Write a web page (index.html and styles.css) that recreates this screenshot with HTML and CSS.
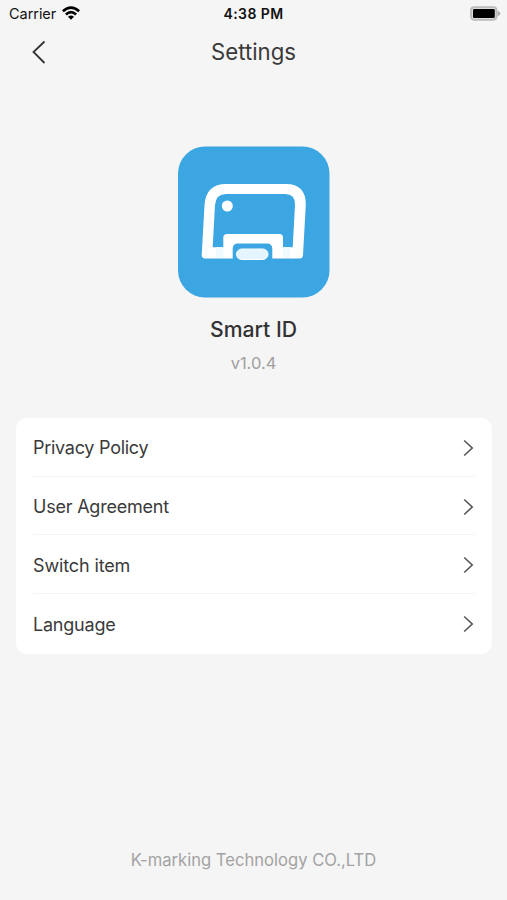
FILE: index.html
```html
<!DOCTYPE html>
<html lang="en">
<head>
<meta charset="utf-8">
<title>Settings</title>
<link rel="stylesheet" href="styles.css">
</head>
<body>
<header class="status">
  <div class="carrier"><span class="carrier-name">Carrier</span>
    <svg width="18" height="14" viewBox="0 0 18 14"><path d="M0 4.300Q9-3.800 18 4.300L16.200 6.200Q9 0 1.800 6.200ZM3 7.500Q9 2.200 15 7.500L13.200 9.400Q9 5.800 4.800 9.400ZM6 10.700Q9 8.200 12 10.700L9 13.800Z"/></svg>
  </div>
  <span class="time">4:38 PM</span>
  <svg class="battery" width="31" height="15" viewBox="0 0 31 15"><rect x="1" y="1.200" width="25.500" height="12.600" rx="3.200" fill="#ddd" stroke="#bbb" stroke-width="1.800"/><rect x="3" y="3" width="21.800" height="9" rx="1.300"/><path d="M27.500 4.500q2.800 1.400 2.800 3t-2.800 3z" fill="#aaa"/></svg>
</header>
<nav class="nav">
  <svg class="back" width="14" height="24" viewBox="0 0 14 24"><path d="M12.500 1.500 1.500 12l11 11"/></svg>
  <h1 class="title">Settings</h1>
</nav>
<section class="about">
  <svg class="logo" width="152" height="152" viewBox="0 0 152 152">
    <rect y=".5" width="151.500" height="151" rx="27" fill="#3ba6e2"/>
    <path fill="#fff" fill-rule="evenodd" d="M27 112.500Q23.500 112.500 23.700 109L26.500 59Q28 38 48 38H108Q128 38 127.800 59L125 109Q124.800 112.500 121.500 112.500H94.300V103Q94.300 97.500 89 97.500H60Q54.700 97.500 54.700 103V112.500ZM34.700 101.200H45.300V91.500Q45.300 88 49 88H101.500Q105 88 105 91.500V101.200H114.700L117 59Q117.300 48 107 48H48Q38 48 37 59Z"/>
    <path d="M38 101.200h7.300v10.500h-7.300ZM105 101.200h7v10.500h-7Z" fill="#f0faff"/>
    <circle cx="49.300" cy="60" r="5.500" fill="#fff"/>
    <rect x="58.500" y="103" width="31.500" height="10.500" rx="5.250" fill="#e4f5ff" stroke="#fff"/>
  </svg>
  <h2 class="name">Smart ID</h2>
  <p class="version">v1.0.4</p>
</section>
<ul class="menu">
  <li class="item"><span class="label privacy">Privacy Policy</span><svg class="chevron" width="11" height="18" viewBox="0 0 11 18"><path d="m1.200 1.500 8 7.500-8 7.500"/></svg></li>
  <li class="item"><span class="label agreement">User Agreement</span><svg class="chevron" width="11" height="18" viewBox="0 0 11 18"><path d="m1.200 1.500 8 7.500-8 7.500"/></svg></li>
  <li class="item"><span class="label switch">Switch item</span><svg class="chevron" width="11" height="18" viewBox="0 0 11 18"><path d="m1.200 1.500 8 7.500-8 7.500"/></svg></li>
  <li class="item"><span class="label language">Language</span><svg class="chevron" width="11" height="18" viewBox="0 0 11 18"><path d="m1.200 1.500 8 7.500-8 7.500"/></svg></li>
</ul>
<footer class="footer">K-marking Technology CO.,LTD</footer>
</body>
</html>
```
FILE: styles.css
```css
* { box-sizing: border-box; margin: 0; padding: 0; }
body { height: 900px; background: #f5f5f5; color: #333; font-family: Inter, sans-serif; display: flex; flex-direction: column; overflow: hidden; }
svg { display: block; flex: none; }
.status { height: 26px; padding: 0 6px 0 9px; display: grid; grid-template-columns: 1fr auto 1fr; align-items: center; color: #111; }
.carrier { display: flex; align-items: center; gap: 6px; font-size: 14.500px; letter-spacing: -.05px; }
.time { font-size: 14px; font-weight: 600; letter-spacing: .4px; margin-left: -3px; }
.battery { justify-self: end; }
.nav { height: 50px; display: grid; grid-template-columns: 1fr auto 1fr; align-items: center; padding: 2px 32px 0; }
.back path { fill: none; stroke: #333; stroke-width: 1.800; }
.title { font-size: 22.200px; font-weight: 400; line-height: 28px; color: #3a3a3a; }
.about { height: 342px; padding-top: 70px; display: flex; flex-direction: column; align-items: center; }
.name { margin-top: 17px; font-size: 21.200px; line-height: 28px; font-weight: 500; }
.version { margin-top: 9px; font-size: 16.500px; line-height: 22px; color: #a0a0a0; }
.menu { list-style: none; height: 236px; margin: 0 15px 0 16px; padding: 0 17px; background: #fff; border-radius: 11px; }
.item { height: 58.700px; display: flex; align-items: center; justify-content: space-between; padding-top: 2px; border-bottom: 1px solid #f4f4f4; }
.item:last-child { border-bottom: 0; }
.label { font-size: 18px; color: #3a3a3a; }
.privacy { letter-spacing: -.27px; }
.agreement { letter-spacing: -.22px; }
.switch { letter-spacing: -.13px; }
.language { letter-spacing: -.22px; }
.chevron { margin-right: 1px; }
.chevron path { fill: none; stroke: #555; stroke-width: 1.600; }
.footer { margin-top: auto; padding-bottom: 29px; text-align: center; font-size: 16.600px; line-height: 22px; color: #a3a3a3; }
```
